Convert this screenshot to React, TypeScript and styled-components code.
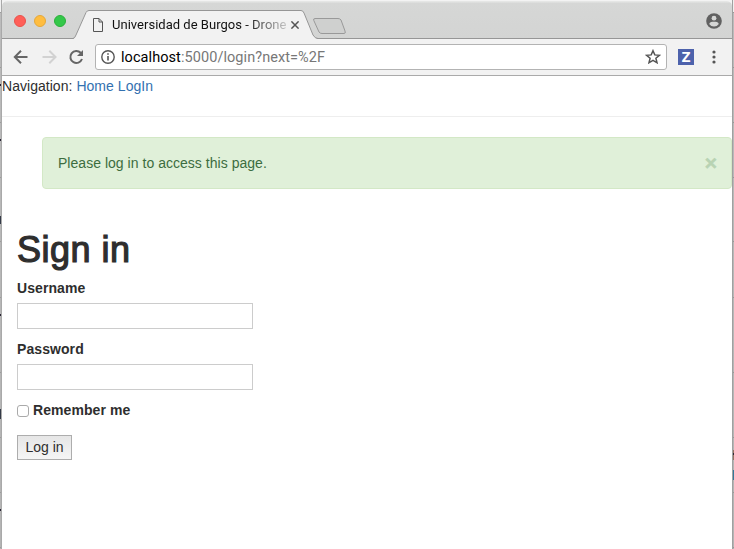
import React from 'react';
import styled, { createGlobalStyle } from 'styled-components';

const GlobalStyle = createGlobalStyle`
  * { box-sizing: border-box; }
  html, body, #root { height: 100%; }
  body {
    margin: 0;
    overflow: hidden;
    color: #2e2e2e;
    font: 14px/20px "Liberation Sans", Arial, sans-serif;
  }
`;

const Desktop = styled.div`
  display: grid;
  grid-template-columns: 2px 730px 2px;
  height: 549px;
  background: #f3f3f3;
`;

const Edge = styled.div<{ $side: 'left' | 'right' }>`
  position: relative;
  overflow: hidden;
  background: linear-gradient(#f0f0f0 0 12px, #bcbcbc 13px, #bababa 70px, #b4b4b4);
  ${p => (p.$side === 'left' ? 'border-right: 1px solid #a9a9a9;' : 'border-left: 1px solid #a0a0a0;')}
`;

const Fragment = styled.i<{ $top: number; $height: number; $color: string }>`
  position: absolute;
  left: -1px;
  width: 3px;
  top: ${p => p.$top}px;
  height: ${p => p.$height}px;
  background: ${p => p.$color};
`;

const Window = styled.main`
  display: flex;
  flex-direction: column;
  margin-top: 1px;
  height: 548px;
  background: #fff;
  border-radius: 5px 5px 0 0;
  overflow: hidden;
`;

const TabStrip = styled.header`
  display: flex;
  height: 38px;
  flex: none;
  background: linear-gradient(#e5e6e5 0 1px, #d6d7d6 2px, #d3d4d3);
  border-bottom: 1px solid #969696;
`;

const Lights = styled.div`
  display: flex;
  gap: 8px;
  padding: 14px 0 0 12px;
  width: 71px;
`;

const Light = styled.span<{ $fill: string; $edge: string }>`
  width: 12px;
  height: 12px;
  border-radius: 50%;
  background: ${p => p.$fill};
  border: 1px solid ${p => p.$edge};
`;

const Tab = styled.div`
  position: relative;
  width: 246px;
  height: 38px;
  flex: none;
`;

const TabShape = styled.svg`
  position: absolute;
  inset: 0;
`;

const TabContent = styled.div`
  position: relative;
  display: flex;
  align-items: center;
  height: 29px;
  margin-top: 9px;
  padding-left: 20px;
`;

const TabTitle = styled.span`
  width: 176px;
  flex: none;
  margin: 0 3px 0 9px;
  overflow: hidden;
  white-space: nowrap;
  font: 13px/18px Roboto, sans-serif;
  letter-spacing: 0.02px;
  color: #111;
  mask-image: linear-gradient(90deg, #000 134px, transparent 184px);
`;

const NewTab = styled.svg`
  margin: 16px 0 0 -6px;
`;

const Profile = styled.svg`
  margin: 12px 10px 0 auto;
`;

const Toolbar = styled.nav`
  display: flex;
  align-items: center;
  flex: none;
  height: 37px;
  padding: 0 9px;
  background: #f2f2f2;
  border-bottom: 1px solid #aaa;
`;

const NavIcon = styled.svg`
  flex: none;
  margin-right: 8px;
`;

const AddressBar = styled.div`
  display: flex;
  align-items: center;
  flex: none;
  width: 572px;
  height: 26px;
  padding: 0 5px;
  background: #fff;
  border: 1px solid #b3b3b3;
  border-radius: 3px;
  font: 14.5px/22px Roboto, sans-serif;
  color: #000;
`;

const Address = styled.span`
  margin-left: 6px;
  padding-top: 2px;
  letter-spacing: 0.07px;
`;

const Path = styled.span`
  color: #777;
`;

const Star = styled.svg`
  margin-left: auto;
`;

const Extension = styled.span`
  width: 16px;
  height: 16px;
  flex: none;
  margin-left: 11px;
  background: #4d62ac;
  color: #fff;
  font: bold 15px/15px "Open Sans", sans-serif;
  text-align: center;
`;

const Menu = styled.svg`
  flex: none;
  margin-left: 16px;
`;

const SiteNav = styled.div`
  display: flex;
  gap: 4px;
  height: 41px;
  border-bottom: 1px solid #eee;
  letter-spacing: 0.03px;
`;

const Link = styled.a`
  color: #3371b0;
`;

const Alert = styled.div`
  display: flex;
  justify-content: space-between;
  height: 52px;
  margin: 20px 0 0 40px;
  padding: 15px 14px 15px 15px;
  color: #3c6d40;
  background: #e0f0d9;
  border: 1px solid #d3e8c6;
  border-radius: 4px;
  letter-spacing: 0.03px;
`;

const Dismiss = styled.span`
  font: bold 21px/19px "Liberation Sans", Arial, sans-serif;
  color: #b8d3b3;
  -webkit-text-stroke: 0.5px #b8d3b3;
`;

const Form = styled.form`
  display: flex;
  flex-direction: column;
  align-items: flex-start;
  padding: 41px 15px 0;
`;

const Heading = styled.h1`
  margin: 0 0 8px;
  font-size: 36px;
  line-height: 40px;
  font-weight: 400;
  letter-spacing: 0.5px;
  -webkit-text-stroke: 1.2px #2e2e2e;
`;

const Label = styled.label`
  font-weight: 700;
  letter-spacing: 0.08px;
`;

const Input = styled.input`
  width: 236px;
  height: 26px;
  margin: 5px 0 10px;
  padding: 2px 4px;
  background: #fff;
  border: 1px solid #ccc;
  font: inherit;
`;

const Remember = styled.div`
  display: flex;
  gap: 4px;
`;

const Checkbox = styled.input`
  appearance: none;
  width: 12px;
  height: 12px;
  margin: 5px 0 0;
  background: #fff;
  border: 1px solid #aaa;
  border-radius: 3px;
`;

const Submit = styled.button`
  width: 55px;
  height: 25px;
  margin-top: 15px;
  padding: 0 0 2px;
  color: #2e2e2e;
  background: linear-gradient(#e6e6e6, #f5f5f5);
  border: 1px solid #adadad;
  font: inherit;
`;

const leftMarks = [86, 141, 316, 511];
const leftLetters = [[216, 8], [409, 10]];
const rules = [12, 67, 122, 177, 241, 297, 372, 437, 492, 547];

export default function App() {
  return (
    <>
      <GlobalStyle />
      <Desktop>
        <Edge $side="left">
          {rules.map(y => <Fragment key={y} $top={y} $height={1} $color="#9c9c9c" />)}
          {leftMarks.map(y => <Fragment key={y} $top={y - 2} $height={2} $color="#282333" />)}
          {leftLetters.map(([y, h]) => <Fragment key={y} $top={y} $height={h} $color="#343a48" />)}
        </Edge>
        <Window>
          <TabStrip>
            <Lights>
              <Light $fill="#ff5f58" $edge="#e9524b" />
              <Light $fill="#ffbd40" $edge="#e5a83a" />
              <Light $fill="#34c84a" $edge="#2bb03b" />
            </Lights>
            <Tab>
              <TabShape width="246" height="38" viewBox="0 0 246 38">
                <path d="M0 38C2 37 2 36 3 34L13 11Q14 9.5 16 9.5H228Q230 9.5 231 12L240 34Q242 37.5 245 38Z" fill="#f2f2f2" />
                <path d="M0 37.5Q2 37 3 34L13 11.5Q14 9.5 16 9.5H228Q230 9.5 231 12L240 34Q242 37.5 245 37.5" fill="none" stroke="#969696" />
              </TabShape>
              <TabContent>
                <svg width="10" height="14" viewBox="0 0 10 14" fill="none" stroke="#555">
                  <path d="M.5.5H6L9.5 4V13.5H.5ZM6 .5V4H9.5" />
                </svg>
                <TabTitle>Universidad de Burgos - Drone</TabTitle>
                <svg width="8" height="8" viewBox="0 0 8 8" stroke="#555" strokeWidth="1.5"><path d="M.4.4 7.6 7.6M7.6.4.4 7.6" /></svg>
              </TabContent>
            </Tab>
            <NewTab width="34" height="18" viewBox="0 0 34 18">
              <path d="M2 1.5H25Q27 1.5 28 3L32 14Q33 16.5 31 16.5H9Q7 16.5 6 15L.8 3.5Q0 1.5 2 1.5Z" fill="#cfd0cf" stroke="#999" />
            </NewTab>
            <Profile width="16" height="16" viewBox="0 0 16 16">
              <circle cx="8" cy="8" r="7.8" fill="#616161" />
              <circle cx="8" cy="5.2" r="2.4" fill="#d5d6d5" />
              <path d="M3.2 11C3.8 9 6 8.8 8 8.8S12.2 9 12.8 11Q11 13.5 8 13.5T3.2 11Z" fill="#d5d6d5" />
            </Profile>
          </TabStrip>
          <Toolbar>
            <NavIcon width="20" height="20" viewBox="0 0 20 20" fill="none" stroke="#666" strokeWidth="2"><path d="M16.5 10H4M10 3.8 3.8 10 10 16.2" /></NavIcon>
            <NavIcon width="20" height="20" viewBox="0 0 20 20" fill="none" stroke="#d2d2d2" strokeWidth="2"><path d="M3.5 10H16M10.3 3.8 16.5 10 10.3 16.2" /></NavIcon>
            <NavIcon width="20" height="20" viewBox="0 0 20 20" fill="none" stroke="#666" strokeWidth="2"><path d="M15 12A6 6 0 1 1 13.7 5.8L15 7.2" /><path d="M16 3V9H10Z" fill="#666" stroke="none" /></NavIcon>
            <AddressBar>
              <svg width="14" height="14" viewBox="0 0 14 14"><circle cx="7" cy="7" r="6.2" fill="none" stroke="#555" strokeWidth="1.4" /><path d="M7 6V10.5M7 3.2V4.8" stroke="#555" strokeWidth="1.6" /></svg>
              <Address>localhost<Path>:5000/login?next=%2F</Path></Address>
              <Star width="16" height="16" viewBox="0 0 16 16"><path d="M8 1.7 9.8 5.9 14.4 6.3 10.9 9.3 12 13.8 8 11.4 4 13.8 5.1 9.3 1.6 6.3 6.2 5.9Z" fill="none" stroke="#555" strokeWidth="1.5" /></Star>
            </AddressBar>
            <Extension>Z</Extension>
            <Menu width="8" height="16" viewBox="0 0 8 16" fill="#555"><circle cx="4" cy="3" r="1.6" /><circle cx="4" cy="8" r="1.6" /><circle cx="4" cy="13" r="1.6" /></Menu>
          </Toolbar>
          <SiteNav><span>Navigation:</span><Link>Home</Link><Link>LogIn</Link></SiteNav>
          <Alert role="alert"><span>Please log in to access this page.</span><Dismiss>×</Dismiss></Alert>
          <Form>
            <Heading>Sign in</Heading>
            <Label htmlFor="username">Username</Label>
            <Input id="username" />
            <Label htmlFor="password">Password</Label>
            <Input id="password" type="password" />
            <Remember><Checkbox id="remember" type="checkbox" /><Label htmlFor="remember">Remember me</Label></Remember>
            <Submit type="button">Log in</Submit>
          </Form>
        </Window>
        <Edge $side="right">
          {rules.map(y => <Fragment key={y} $top={y} $height={1} $color="#999" />)}
          <Fragment $top={450} $height={10} $color="#987362" />
          <Fragment $top={453} $height={2} $color="#302a35" />
          <Fragment $top={470} $height={10} $color="#34789a" />
        </Edge>
      </Desktop>
    </>
  );
}
